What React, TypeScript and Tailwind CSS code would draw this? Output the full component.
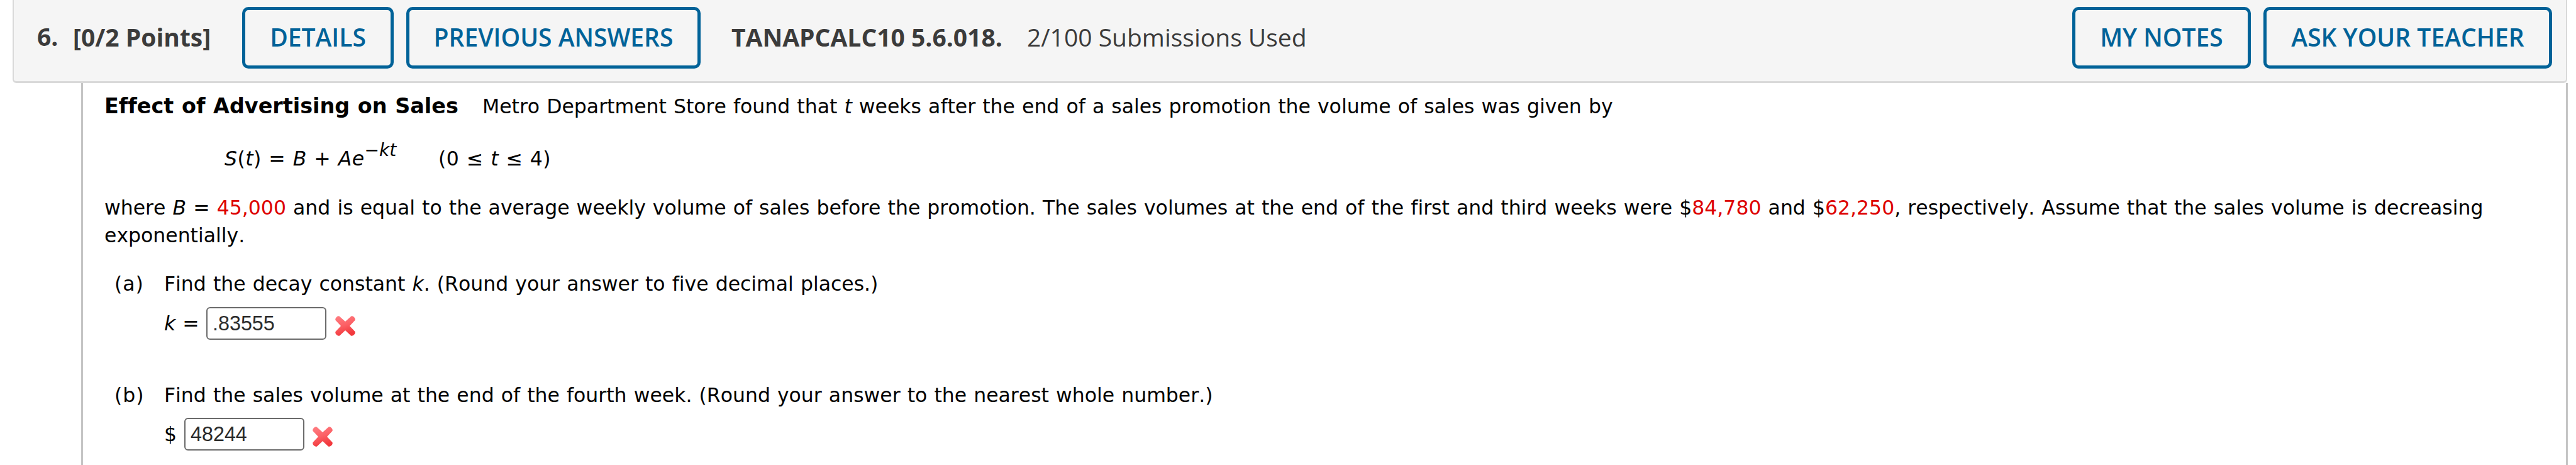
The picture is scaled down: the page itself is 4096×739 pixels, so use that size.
import type { ReactNode } from 'react';

const HeaderButton = ({ children, className }: { children: ReactNode; className: string }) => (
    <button
        className={`flex h-[98px] shrink-0 items-center justify-center rounded-[10px] border-[5px] border-[#006298] pb-px font-semibold text-[#006298] ${className}`}
    >
        {children}
    </button>
);

const WrongMark = ({ className }: { className: string }) => (
    <svg viewBox="0 0 34 34" className={`h-[34px] w-[34px] shrink-0 ${className}`}>
        <defs>
            <linearGradient id="wrong" x1="0" y1="0" x2="0.3" y2="1">
                <stop offset="0" stopColor="#ff7f84" />
                <stop offset="0.55" stopColor="#fc6065" />
                <stop offset="1" stopColor="#f2393d" />
            </linearGradient>
        </defs>
        <path
            d="M7.5 1.5 L17 10 L26.5 1.5 Q29 0.5 31 3 Q33.5 5.5 32.5 8 L24 17 L32.5 26 Q33.5 28.5 31 31 Q28.5 33.5 26 32.5 L17 24 L8 32.5 Q5.500 33.5 3 31 Q0.5 28.5 1.5 26 L10 17 L1.5 8 Q0.5 5.5 3 3 Q5 0.5 7.5 1.5 Z"
            fill="url(#wrong)"
        />
    </svg>
);

const Answer = ({ value, className }: { value: string; className: string }) => (
    <input
        readOnly
        defaultValue={value}
        className={`h-[52px] w-[191px] shrink-0 rounded-[6px] border-[2.5px] border-[#6b6b6b] bg-white font-['Liberation_Sans',sans-serif] text-[32.3px] text-[#2b2b2b] outline-none ${className}`}
    />
);

const Red = ({ children }: { children: ReactNode }) => <span className="text-[#dd0000]">{children}</span>;

export default function App() {
    return (
        <div className="flex h-[739px] w-[4096px] flex-col overflow-hidden bg-white">
            {/* Question header */}
            <header className="ml-[20px] flex h-[132px] w-[4062px] shrink-0 items-start rounded-b-[6px] border-x-[2px] border-b-[3px] border-[#d9d9d9] bg-[#f5f5f5] pt-[11px] pr-[22px] font-['Open_Sans',sans-serif] text-[39px] whitespace-nowrap text-[#3b3b3b]">
                <div className="flex h-[98px] w-full items-center">
                    <span className="w-[94px] shrink-0 pb-[3px] pl-[37px] font-bold">6.</span>
                    <span className="w-[269px] shrink-0 pb-px font-bold">[0/2 Points]</span>
                    <HeaderButton className="w-[241px]">DETAILS</HeaderButton>
                    <HeaderButton className="ml-[20px] w-[468px]">PREVIOUS ANSWERS</HeaderButton>
                    <span className="ml-[49px] w-[470px] shrink-0 pb-px font-bold">TANAPCALC10 5.6.018.</span>
                    <span className="pb-px">2/100 Submissions Used</span>
                    <HeaderButton className="ml-auto w-[284px]">MY NOTES</HeaderButton>
                    <HeaderButton className="ml-[20px] w-[459px]">ASK YOUR TEACHER</HeaderButton>
                </div>
            </header>

            {/* Question body */}
            <main className="ml-[129px] flex w-[3954px] grow flex-col border-x-[3px] border-[#c4c4c4] pt-[15px] pl-[34px] font-['DejaVu_Sans',sans-serif] text-[31.5px] leading-[44px] whitespace-nowrap text-black [font-kerning:none] [font-variant-ligatures:none] [word-spacing:1.07px]">
                <p className="flex h-[44px] items-baseline">
                    <b className="w-[601px] shrink-0 text-[33.4px]">Effect of Advertising on Sales</b>
                    <span>
                        Metro Department Store found that <i>t</i> weeks after the end of a sales promotion the volume
                        of sales was given by
                    </span>
                </p>

                <div className="mt-[39px] flex h-[44px] pl-[191px] tracking-[0.45px]">
                    <span className="w-[340px] shrink-0">
                        <i>S</i>(<i>t</i>) = <i>B</i> + <i>Ae</i>
                        <sup className="relative -top-[15px] align-baseline text-[28px] leading-none tracking-normal">
                            −<i>kt</i>
                        </sup>
                    </span>
                    <span>
                        (0 ≤ <i>t</i> ≤ 4)
                    </span>
                </div>

                <p className="mt-[34px] h-[88px]">
                    where <i>B</i> = <Red>45,000</Red> and is equal to the average weekly volume of sales before the
                    promotion. The sales volumes at the end of the first and third weeks were $<Red>84,780</Red> and $
                    <Red>62,250</Red>, respectively. Assume that the sales volume is decreasing
                    <br />
                    exponentially.
                </p>

                {/* Part (a) */}
                <div className="mt-[33px] flex h-[44px] pl-[16px]">
                    <span className="w-[79px] shrink-0 tracking-[1px]">(a)</span>
                    <span>
                        Find the decay constant <i>k</i>. (Round your answer to five decimal places.)
                    </span>
                </div>
                <div className="mt-[15px] flex h-[52px] items-center pl-[95px]">
                    <span className="w-[67px] shrink-0">
                        <i>k</i> =
                    </span>
                    <Answer value=".83555" className="pl-[8px]" />
                    <WrongMark className="mt-[8px] ml-[13px]" />
                </div>

                {/* Part (b) */}
                <div className="mt-[66px] flex h-[44px] pl-[16px]">
                    <span className="w-[79px] shrink-0 tracking-[1px]">(b)</span>
                    <span>
                        Find the sales volume at the end of the fourth week. (Round your answer to the nearest whole
                        number.)
                    </span>
                </div>
                <div className="mt-[14px] flex h-[52px] items-center pl-[95px]">
                    <span className="w-[32px] shrink-0">$</span>
                    <Answer value="48244" className="pl-[8px]" />
                    <WrongMark className="mt-[8px] ml-[12px]" />
                </div>
            </main>
        </div>
    );
}
